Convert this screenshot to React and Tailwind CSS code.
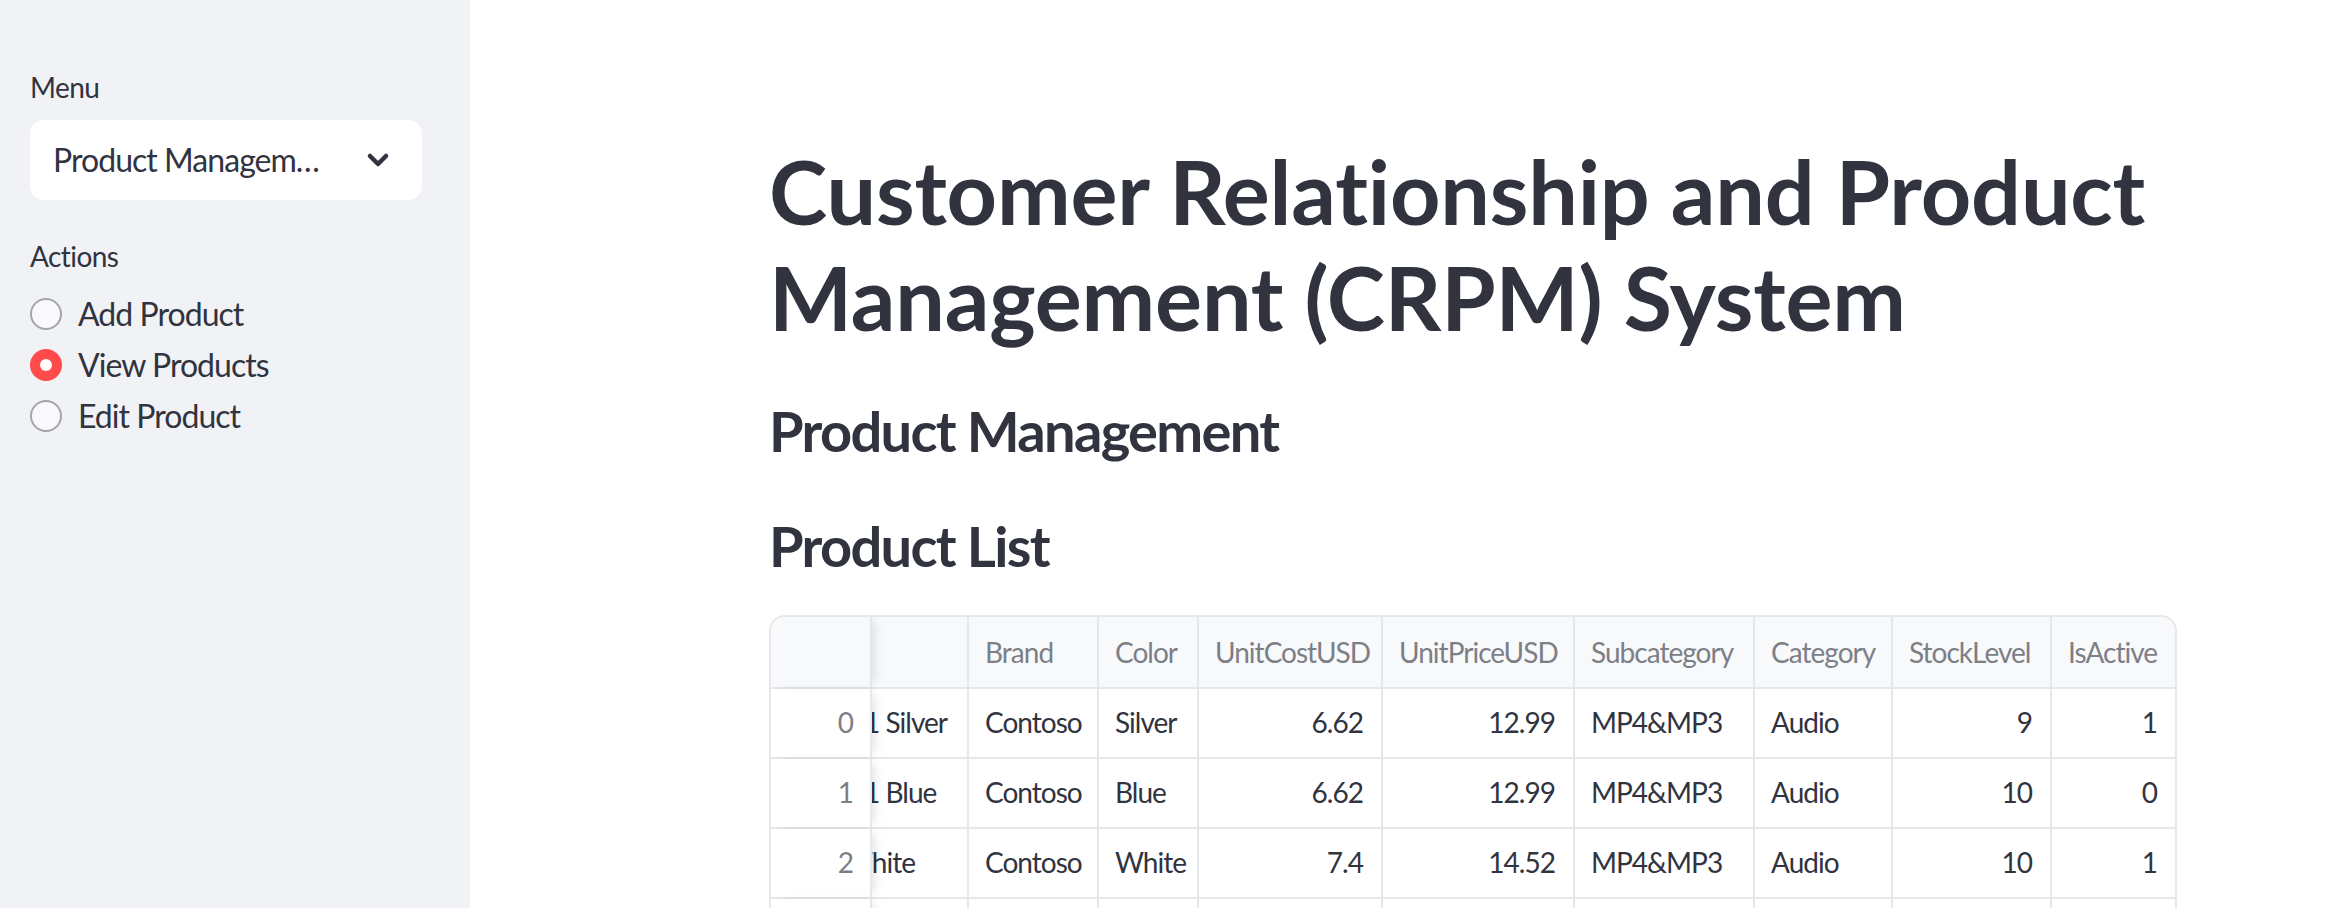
import { ChevronDown } from 'lucide-react';

const columns = [
  { key: 'name', label: '', w: 'w-[97px]', num: false },
  { key: 'brand', label: 'Brand', w: 'w-[130px]', num: false },
  { key: 'color', label: 'Color', w: 'w-[100px]', num: false },
  { key: 'cost', label: 'UnitCostUSD', w: 'w-[184px]', num: true },
  { key: 'price', label: 'UnitPriceUSD', w: 'w-[192px]', num: true },
  { key: 'sub', label: 'Subcategory', w: 'w-[180px]', num: false },
  { key: 'cat', label: 'Category', w: 'w-[138px]', num: false },
  { key: 'stock', label: 'StockLevel', w: 'w-[159px]', num: true },
  { key: 'active', label: 'IsActive', w: 'flex-1', num: true },
];

const rows = [
  { name: '1 Silver', shift: '-ml-[8px]', brand: 'Contoso', color: 'Silver', cost: '6.62', price: '12.99', sub: 'MP4&MP3', cat: 'Audio', stock: '9', active: '1' },
  { name: '1 Blue', shift: '-ml-[8px]', brand: 'Contoso', color: 'Blue', cost: '6.62', price: '12.99', sub: 'MP4&MP3', cat: 'Audio', stock: '10', active: '0' },
  { name: 'White', shift: '-ml-[28px]', brand: 'Contoso', color: 'White', cost: '7.4', price: '14.52', sub: 'MP4&MP3', cat: 'Audio', stock: '10', active: '1' },
  { name: '1 Black', shift: '-ml-[8px]', brand: 'Contoso', color: 'Black', cost: '11.0', price: '21.57', sub: 'MP4&MP3', cat: 'Audio', stock: '7', active: '1' },
];

const actions = ['Add Product', 'View Products', 'Edit Product'];

function Radio({ label, checked }) {
  return (
    <div className="flex items-center h-[51px] gap-[16px]">
      {checked ? (
        <span className="w-[32px] h-[32px] rounded-full bg-[#ff4b4b] flex items-center justify-center">
          <span className="w-[12px] h-[12px] rounded-full bg-white" />
        </span>
      ) : (
        <span className="w-[32px] h-[32px] rounded-full border-2 border-[#a3a5ad] bg-[#f9f9fb]" />
      )}
      <span className="text-[32px] leading-[40px] tracking-[-0.03em] text-[#31333f]">{label}</span>
    </div>
  );
}

function Sidebar() {
  return (
    <aside className="w-[470px] shrink-0 h-full bg-[#f0f2f6] pl-[30px] pr-[48px] pt-[67px]">
      <div className="text-[28px] leading-[40px] tracking-[-0.02em] text-[#31333f]">Menu</div>
      <div className="mt-[13px] h-[80px] rounded-[14px] bg-white flex items-center justify-between pl-[23px] pr-[28px]">
        <span className="text-[32px] tracking-[-0.03em] text-[#31333f] whitespace-nowrap">Product Managem…</span>
        <ChevronDown size={32} strokeWidth={3.4} className="text-[#31333f]" />
      </div>
      <div className="mt-[36px] text-[28px] leading-[40px] tracking-[-0.02em] text-[#31333f]">Actions</div>
      <div className="mt-[12px]">
        {actions.map((a, i) => (
          <Radio key={a} label={a} checked={i === 1} />
        ))}
      </div>
    </aside>
  );
}

function DataTable() {
  return (
    <div className="border-2 border-[#e6e7ea] rounded-[16px] overflow-hidden text-[28px] tracking-[-0.035em]">
      {/* header */}
      <div className="flex h-[72px] bg-[#f8f9fb] border-b-2 border-[#e6e7ea] text-[#7d7f87]">
        <div className="w-[101px] shrink-0 bg-[#f8f9fb] relative z-10 shadow-[6px_0_10px_-4px_rgba(0,0,0,0.12)] border-r-2 border-[#e6e7ea]" />
        {columns.map((c, i) => (
          <div
            key={c.key}
            className={`${c.w} shrink-0 flex items-center px-[16px] whitespace-nowrap ${i < columns.length - 1 ? 'border-r-2 border-[#e6e7ea]' : ''}`}
          >
            {c.label}
          </div>
        ))}
      </div>
      {rows.map((r, ri) => (
        <div key={ri} className="flex h-[70px] border-b-2 border-[#e6e7ea] text-[#31333f]">
          <div className="w-[101px] shrink-0 bg-white relative z-10 shadow-[6px_0_10px_-4px_rgba(0,0,0,0.12)] border-r-2 border-[#e6e7ea] flex items-center justify-end pr-[17px] pb-[2px] text-[#7d7f87]">
            {ri}
          </div>
          {columns.map((c, i) => (
            <div
              key={c.key}
              className={`${c.w} shrink-0 flex items-center pb-[2px] overflow-hidden whitespace-nowrap ${c.num ? 'justify-end px-[18px]' : 'px-[16px]'} ${c.key === 'name' ? 'pl-0' : ''} ${i < columns.length - 1 ? 'border-r-2 border-[#e6e7ea]' : ''}`}
            >
              {c.key === 'name' ? <span className={r.shift}>{r.name}</span> : r[c.key]}
            </div>
          ))}
        </div>
      ))}
    </div>
  );
}

export default function App() {
  return (
    <div className="flex w-[2332px] h-[908px] overflow-hidden bg-white font-['Lato','Noto_Sans',sans-serif]">
      <Sidebar />
      <main className="flex-1 pl-[299px] pt-[138px]">
        <div className="w-[1408px]">
          <h1 className="text-[88px] leading-[106px] font-bold tracking-[-0.002em] text-[#31333f]">
            Customer Relationship and Product Management (CRPM) System
          </h1>
          <h3 className="mt-[47px] text-[56px] leading-[67px] font-bold tracking-[-0.03em] text-[#31333f]">Product Management</h3>
          <h3 className="mt-[48px] text-[56px] leading-[67px] font-bold tracking-[-0.03em] text-[#31333f]">Product List</h3>
          <div className="mt-[36px]">
            <DataTable />
          </div>
        </div>
      </main>
    </div>
  );
}
